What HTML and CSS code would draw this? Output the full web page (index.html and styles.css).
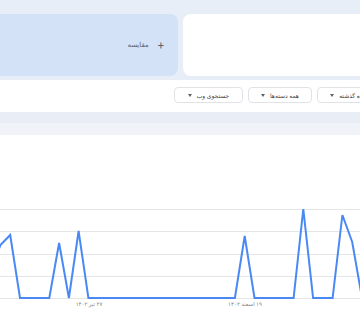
FILE: index.html
```html
<!DOCTYPE html>
<html lang="fa">
<head>
    <meta charset="UTF-8">
    <meta name="viewport" content="width=device-width, initial-scale=1.0">
    <title>روند جستجو</title>
    <link rel="stylesheet" href="styles.css">
</head>
<body>
    <div class="compare-area">
        <div class="compare-row">
            <div class="card card-compare">
                <span class="plus">+</span>
                <span class="compare-label">مقایسه</span>
            </div>
            <div class="card card-term"></div>
        </div>
    </div>
    <div class="filters">
        <button type="button" class="filter filter-wide"><span>۱۲ ماه گذشته</span><i class="caret"></i></button>
        <button type="button" class="filter"><span>همه دسته‌ها</span><i class="caret"></i></button>
        <button type="button" class="filter filter-wide"><span>جستجوی وب</span><i class="caret"></i></button>
    </div>
    <div class="band-top"></div>
    <div class="band-bottom"></div>
    <div class="chart">
        <svg class="chart-svg" width="360" height="185" viewBox="0 0 360 185">
            <g class="grid">
                <line x1="0" y1="74.5" x2="360" y2="74.5"></line>
                <line x1="0" y1="96.5" x2="360" y2="96.5"></line>
                <line x1="0" y1="119.5" x2="360" y2="119.5"></line>
                <line x1="0" y1="141.5" x2="360" y2="141.5"></line>
                <line x1="0" y1="163.5" x2="360" y2="163.5"></line>
            </g>
            <polyline class="trend" points="-9.3,135 0.5,110 10.2,100 20,163 29.8,163 39.5,163 49.3,163 59.1,108 68.9,163 78.6,96 88.4,163 234.9,163 244.7,101 254.5,163 293.6,163 303.3,74 313.1,163 332.6,163 342.4,80 352.2,107 362,163"></polyline>
            <text class="axis-label" x="89" y="171">۲۷ تیر ۱۴۰۲</text>
            <text class="axis-label" x="245" y="171">۱۹ اسفند ۱۴۰۲</text>
        </svg>
    </div>
</body>
</html>
```

FILE: styles.css
```css
body {
    margin: 0;
    padding: 0;
    background-color: #fff;
    font-family: Roboto, "DejaVu Sans", sans-serif;
    overflow: hidden;
}
.compare-area {
    background-color: #e8eef7;
    padding: 14px 0 4px;
    overflow: hidden;
}
.compare-row {
    display: flex;
    gap: 5px;
    margin: 0 -20px;
    height: 62px;
}
.card {
    border-radius: 8px;
}
.card-compare {
    flex: 0 0 198px;
    background-color: #d3e2f6;
    display: flex;
    direction: rtl;
    align-items: center;
    gap: 9px;
    padding-right: 14px;
    box-sizing: border-box;
    color: #5f6368;
}
.plus {
    font-size: 11px;
    line-height: 1;
}
.compare-label {
    font-size: 7px;
}
.card-term {
    flex: 1;
    background-color: #fff;
}
.filters {
    display: flex;
    direction: rtl;
    gap: 5px;
    padding: 7px 0 9px;
    margin-right: -26px;
}
.filter {
    flex: 0 0 64px;
    height: 16px;
    box-sizing: border-box;
    border: 1px solid #e1e3e6;
    border-radius: 4px;
    background-color: #fff;
    display: flex;
    align-items: center;
    justify-content: center;
    gap: 5px;
    padding: 0 10px;
    font-family: inherit;
    font-size: 6px;
    color: #3c4043;
    white-space: nowrap;
}
.filter-wide {
    flex-basis: 69px;
}
.caret {
    width: 0;
    height: 0;
    border-left: 2.5px solid transparent;
    border-right: 2.5px solid transparent;
    border-top: 3px solid #5f6368;
}
.band-top {
    height: 11px;
    background-color: #e9eef6;
}
.band-bottom {
    height: 12px;
    background-color: #f0f3f8;
}
.chart {
    background-color: #fff;
    height: 185px;
}
.chart-svg {
    display: block;
}
.grid line {
    stroke: #e6e6e6;
    stroke-width: 1;
}
.trend {
    fill: none;
    stroke: #4a89f3;
    stroke-width: 2;
    stroke-linejoin: miter;
}
.axis-label {
    font-size: 5.5px;
    fill: #80868b;
    text-anchor: middle;
    direction: rtl;
}
```
